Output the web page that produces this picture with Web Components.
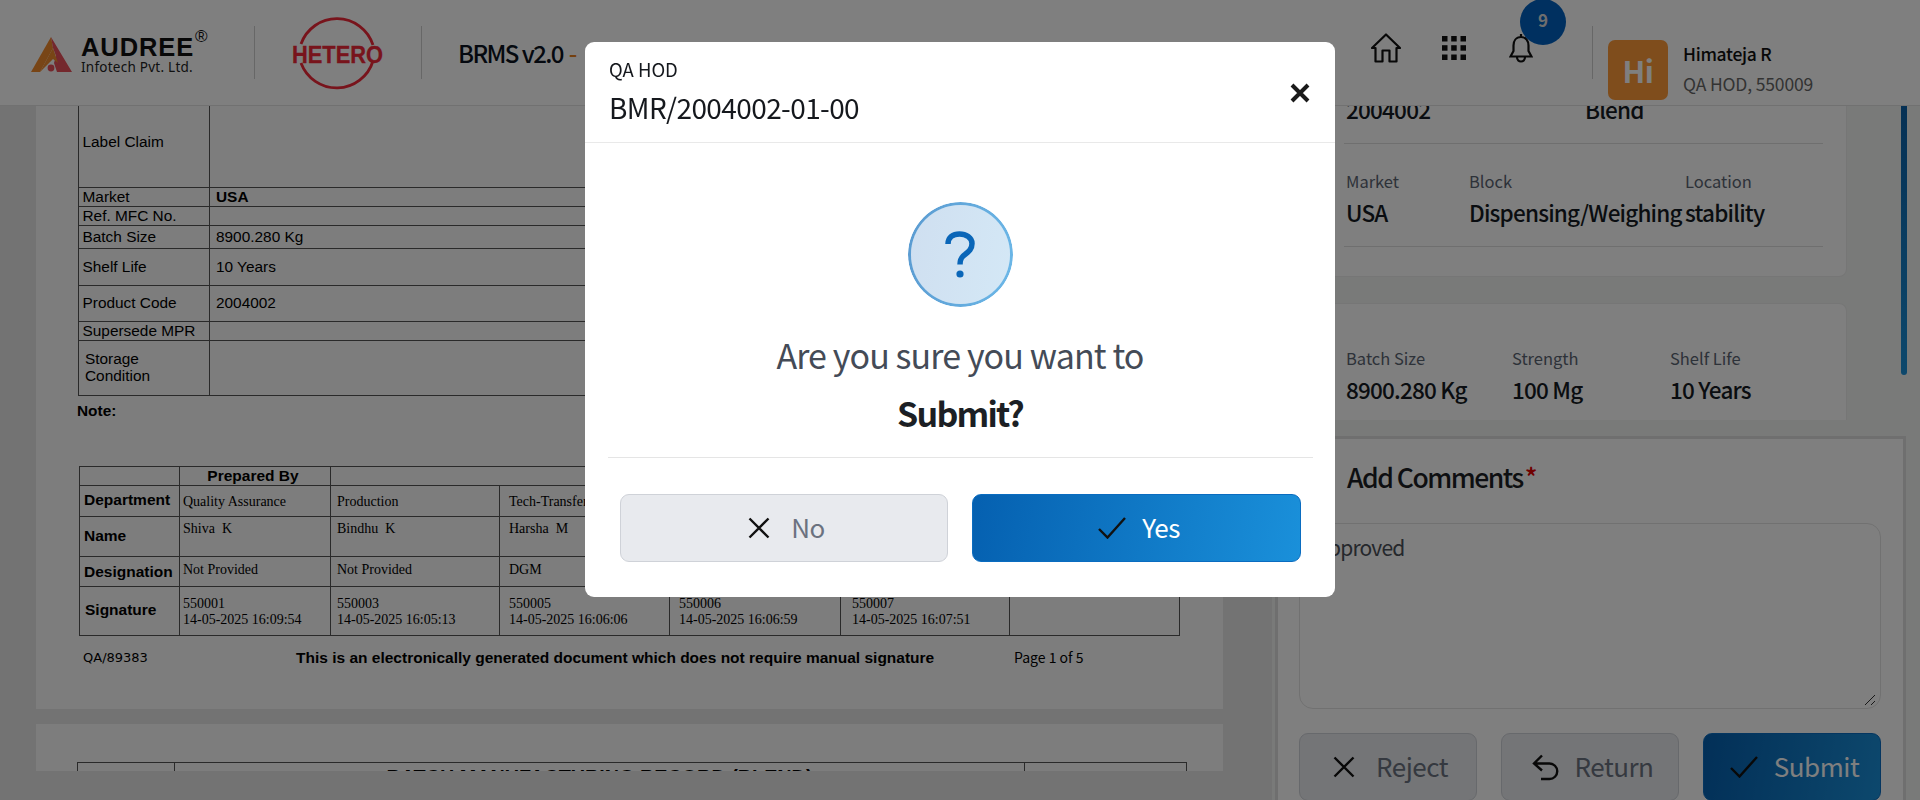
<!DOCTYPE html>
<html lang="en"><head><meta charset="utf-8"><title>BRMS</title>
<style>
html,body{margin:0;padding:0;height:800px;overflow:hidden;background:#e6e6e6;font-family:"Noto Sans CJK SC","Noto Sans",sans-serif}
app-shell{display:block}
</style></head><body>
<app-shell>
  <app-header></app-header>
  <doc-viewer></doc-viewer>
  <side-panel></side-panel>
</app-shell>
<confirm-modal role="QA HOD" doc="BMR/2004002-01-00" action="Submit?"></confirm-modal>
<script>
const SANS='"Noto Sans CJK SC","Noto Sans",sans-serif';
const ICONS={
 x:'<svg width="22" height="22" viewBox="0 0 22 22" fill="none" stroke="#111" stroke-width="2.4"><path d="M1.5 1.5 20.5 20.5M20.5 1.5 1.5 20.5"/></svg>',
 check:'<svg width="28" height="22" viewBox="0 0 28 22" fill="none" stroke="#111" stroke-width="2.4"><path d="M1 12 9.5 20.5 27 1"/></svg>',
 back:'<svg width="27" height="27" viewBox="0 0 27 27" fill="none" stroke="#111" stroke-width="2.4"><path d="M10 1.5 2 9.5 10 16.5M2 9.5H17.5a7.5 7.5 0 0 1 0 15.5H9"/></svg>'
};
function def(name,html,init){
  customElements.define(name,class extends HTMLElement{
    constructor(){super();const s=this.attachShadow({mode:'open'});s.innerHTML=typeof html==='function'?html(this):html;}
    connectedCallback(){ if(typeof html==='function'&&!this._d){this._d=1;this.shadowRoot.innerHTML=html(this);} if(init)init(this);}
  });
}
def('ui-button',el=>`<style>
:host{display:block;box-sizing:border-box;height:68px;border-radius:9px;font:400 26px/1 ${SANS};letter-spacing:-.5px}
.b{box-sizing:border-box;height:100%;display:flex;align-items:center;justify-content:center;gap:${el.getAttribute('icon')==='x'?21:16}px;padding-left:5px;border-radius:9px;border:1.5px solid #cfd2d8;background:#e8eaee;color:#6b7280}
:host([primary]) .b{border-color:#0a6cc0;background:linear-gradient(100deg,#0560b0,#1a90da);color:#fff}
svg{display:block;flex:none}span{position:relative;top:-1px}
</style><div class="b">${ICONS[el.getAttribute('icon')]||''}<span><slot></slot></span></div>`);

def('app-header',`<style>
:host{display:flex;align-items:center;box-sizing:border-box;height:106px;background:#fff;border-bottom:1px solid #e2e2e2;position:relative;font-family:${SANS}}
.audree{width:254px;box-sizing:border-box;padding-left:31px;display:flex;gap:9px;align-items:flex-end;height:53px}
.audree svg{display:block;margin-bottom:7px}
.at{position:relative;width:135px;height:53px}
.at b{position:absolute;left:0;top:9px;font:700 25.500px/24px "Liberation Sans",sans-serif;letter-spacing:.9px;color:#111}
.at i{position:absolute;left:0;top:33px;font:normal 400 13.500px/16px "Noto Sans",sans-serif;letter-spacing:.25px;color:#222;white-space:nowrap}
.at u{position:absolute;left:114px;top:3px;text-decoration:none;font:400 17px/16px "Liberation Sans",sans-serif;color:#111}
.sep{width:1px;height:53px;background:#cfcfcf;flex:none}
.het{width:166px;display:flex;justify-content:center}
.het svg{display:block}
.title{margin-left:36px;font:500 24px/30px ${SANS};letter-spacing:-1.6px;color:#0b1220;white-space:nowrap}
.title em{font-style:normal;color:#e8801e;margin-left:6px}
.right{margin-left:auto;display:flex;align-items:center;height:100%}
.ic{display:flex;align-items:center;gap:41px;margin-right:59px;position:relative;top:-5px}
.ic svg{display:block}
.ic .g{margin-right:2px}
.bell{position:relative}
.badge{position:absolute;left:11px;top:-34px;width:46px;height:46px;border-radius:50%;background:#0060c0;color:#ddd;font:700 17px/42px ${SANS};text-align:center}
.who{display:flex;gap:15px;box-sizing:border-box;width:327px;padding-left:15px;align-items:center;position:relative;top:17px}
.av{width:60px;height:60px;border-radius:7px;background:#ff9a38;color:#fff;font:600 30px/60px ${SANS};letter-spacing:-.5px;text-align:center}
.nm{font:500 17.500px/24px ${SANS};letter-spacing:-.3px;color:#111;white-space:nowrap;margin-top:-1px}
.rl{font:400 17.500px/24px ${SANS};letter-spacing:-.15px;color:#666;white-space:nowrap;margin-top:6px}
</style>
<div class="audree">
 <svg width="41" height="35" viewBox="0 0 41 35"><path d="M20 0 0 35H9L22 11Z" fill="#f08a2c"/><path d="M20 0 41 35H26L23 26 25 19 22 11Z" fill="#e8505a"/><path d="M9 35 22 11l5 15-5-4Z" fill="#f08a2c"/><circle cx="20" cy="31" r="3.400" fill="#e8505a"/></svg>
 <div class="at"><b>AUDREE</b><i>Infotech Pvt. Ltd.</i><u>®</u></div>
</div>
<div class="sep"></div>
<div class="het"><svg width="92" height="80" viewBox="292 12 92 80" fill="none"><path d="M301 43A38 38 0 0 1 373 44M301 62A38 38 0 0 0 373 60" stroke="#f02838" stroke-width="2.800"/><text x="292" y="62" font-family="Liberation Sans" font-weight="700" font-size="24" textLength="91" lengthAdjust="spacingAndGlyphs" fill="#f02838" stroke="#f02838" stroke-width=".3">HETERO</text></svg></div>
<div class="sep"></div>
<div class="title">BRMS v2.0<em>-</em></div>
<div class="right">
 <div class="ic">
  <svg width="30" height="30" viewBox="0 0 30 30" fill="none" stroke="#111" stroke-width="2.200" stroke-linejoin="round"><path d="M1 15 15 1.500 29 15H25.500V28.500H18.500V17.500H11.500V28.500H4.500V15Z"/></svg>
  <svg class="g" width="24" height="24" viewBox="0 0 24 24" fill="#111"><rect width="5.500" height="5.500" x="0" y="0"/><rect width="5.500" height="5.500" x="9.200" y="0"/><rect width="5.500" height="5.500" x="18.500" y="0"/><rect width="5.500" height="5.500" x="0" y="9.200"/><rect width="5.500" height="5.500" x="9.200" y="9.200"/><rect width="5.500" height="5.500" x="18.500" y="9.200"/><rect width="5.500" height="5.500" x="0" y="18.500"/><rect width="5.500" height="5.500" x="9.200" y="18.500"/><rect width="5.500" height="5.500" x="18.500" y="18.500"/></svg>
  <div class="bell"><svg width="24" height="30" viewBox="0 0 24 30" fill="none" stroke="#111" stroke-width="2.200"><path d="M12 1v3M12 4C7 4 4.500 8 4.500 12.500V18L1.500 23.500H22.500L19.500 18V12.500C19.500 8 17 4 12 4ZM8 24c0 6 8 6 8 0"/></svg><div class="badge">9</div></div>
 </div>
 <div class="sep"></div>
 <div class="who"><div class="av">Hi</div><div><div class="nm">Himateja R</div><div class="rl">QA HOD, 550009</div></div></div>
</div>`);

def('doc-viewer',`<style>
:host{display:block;position:absolute;left:0;top:106px;width:1272px;height:665px;overflow:hidden;background:#e6e6e6}
.sheet{margin-left:36px;width:1187px;background:#fbfbfb;box-sizing:border-box;color:#000}
.s1{height:604px;padding:0 0 0 42px}
.s2{height:60px;margin-top:15px;padding:38px 0 0 41px}
table{border-collapse:collapse;table-layout:fixed;font:15.400px/17px "Liberation Sans",sans-serif}
td{border:1px solid #555;padding:0 3.500px;vertical-align:middle;overflow:hidden;white-space:nowrap}
.t1{width:1102px;margin-top:-1px;line-height:15px}
.t1 td{padding-bottom:1.500px}
.t1 td:first-child{width:123px}
.t1 td:nth-child(2){padding-left:6px}
.note{font:700 15.400px/17px "Liberation Sans",sans-serif;margin:6px 0 0 -1px}
.t2{width:1100px;margin:47px 0 0 1px}
.t2 td{padding:0 0 0 3px;font:14px/16px "Liberation Serif",serif}
.t2 td:nth-child(3){padding-left:6px}
.t2 td:nth-child(4),.t2 td:nth-child(5){padding-left:9px}
.t2 td:nth-child(6){padding-left:11px}
.t2 td.l{font:700 15.500px/17px "Liberation Sans",sans-serif;padding-left:4px}
.t2 td.h{font:700 15.500px/15px "Liberation Sans",sans-serif;text-align:center;padding:0 4px 1px 0}
.t2 td.u{padding-bottom:3px}
.t2 tr.sg td{padding-top:2px}
.foot{display:grid;grid-template-columns:213px 718px 1fr;margin:13px 0 0 5px;align-items:center;height:17px;white-space:nowrap}
.foot span:first-child{font:400 13px/17px "DejaVu Sans",sans-serif}
.foot b{font:700 15.500px/17px "Liberation Sans",sans-serif}
.foot span:last-child{font:400 14px/17px "Noto Sans CJK SC",sans-serif}
.t3{width:1109px}
.t3 td{height:30px;font:700 19.800px/22px "Liberation Sans",sans-serif;vertical-align:top;padding-top:3px;text-align:center}
</style>
<div class="sheet s1">
<table class="t1">
<tr style="height:82px"><td style="padding-bottom:10px">Label Claim</td><td></td></tr>
<tr style="height:19px"><td>Market</td><td><b>USA</b></td></tr>
<tr style="height:19px"><td>Ref. MFC No.</td><td></td></tr>
<tr style="height:23px"><td>Batch Size</td><td>8900.280 Kg</td></tr>
<tr style="height:37px"><td>Shelf Life</td><td>10 Years</td></tr>
<tr style="height:36px"><td>Product Code</td><td>2004002</td></tr>
<tr style="height:19px"><td>Supersede MPR</td><td></td></tr>
<tr style="height:55px"><td style="padding:0 0 3px 6px;white-space:normal;line-height:17px">Storage<br>Condition</td><td></td></tr>
</table>
<div class="note">Note:</div>
<table class="t2">
<colgroup><col style="width:100px"><col style="width:151px"><col style="width:169px"><col style="width:170px"><col style="width:171px"><col style="width:169px"><col style="width:170px"></colgroup>
<tr style="height:19px"><td></td><td class="h">Prepared By</td><td colspan="5"></td></tr>
<tr style="height:31px"><td class="l u">Department</td><td style="padding-top:2px">Quality Assurance</td><td style="padding-top:2px">Production</td><td style="padding-top:2px">Tech-Transfer</td><td></td><td></td><td></td></tr>
<tr style="height:40px"><td class="l u">Name</td><td style="vertical-align:top;padding-top:4px">Shiva&nbsp; K</td><td style="vertical-align:top;padding-top:4px">Bindhu&nbsp; K</td><td style="vertical-align:top;padding-top:4px">Harsha&nbsp; M</td><td></td><td></td><td></td></tr>
<tr style="height:30px"><td class="l">Designation</td><td class="u">Not Provided</td><td class="u">Not Provided</td><td class="u">DGM</td><td></td><td></td><td></td></tr>
<tr class="sg" style="height:49px"><td class="l" style="padding:0 0 3px 5px">Signature</td><td>550001<br>14-05-2025 16:09:54</td><td>550003<br>14-05-2025 16:05:13</td><td>550005<br>14-05-2025 16:06:06</td><td>550006<br>14-05-2025 16:06:59</td><td>550007<br>14-05-2025 16:07:51</td><td></td></tr>
</table>
<div class="foot"><span>QA/89383</span><b>This is an electronically generated document which does not require manual signature</b><span>Page 1 of 5</span></div>
</div>
<div class="sheet s2">
<table class="t3"><colgroup><col style="width:97px"><col style="width:850px"><col style="width:162px"></colgroup><tr><td></td><td>BATCH MANUFACTURING RECORD (BLEND)</td><td></td></tr></table>
</div>`);

def('info-field',el=>`<style>
:host{display:block;font-family:${SANS}}
.l{font:400 16.500px/24px ${SANS};color:#5b6472;white-space:nowrap}
.v{font:500 22.500px/30px ${SANS};letter-spacing:-.8px;color:#151a22;white-space:nowrap;margin-top:4px}
</style><div class="l">${el.getAttribute('label')||''}</div><div class="v">${el.getAttribute('value')||''}</div>`);

def('side-panel',`<style>
:host{display:block;position:absolute;left:1272px;top:106px;width:648px;height:694px;overflow:hidden;background:#f2f5f2;font-family:${SANS}}
.card{margin:0 73px 26px 0;background:#fefefe;border:1px solid #ececec;border-radius:0 0 8px 8px;box-sizing:border-box;padding-left:73px}
.c1{height:171px;overflow:hidden;border-top:0}
.row0{display:grid;grid-template-columns:239px 1fr;font:500 22.500px/30px ${SANS};letter-spacing:-.8px;color:#151a22;margin:-12px 23px 0 -2px;height:49px;border-bottom:1px solid #dedede;padding-left:2px}
.row1{display:grid;grid-template-columns:123px 216px 1fr;padding:25px 0 0 2px;margin:0 23px 0 -2px;height:103px;box-sizing:border-box;border-bottom:1px solid #dedede}
.c2{height:117px;border-radius:8px 8px 0 0;border-bottom:0;margin-bottom:16px;padding-top:42px}
.row2{display:grid;grid-template-columns:166px 158px 1fr}
.comments{margin:0 14px 0 3px;background:#fff;border:3px solid #dfdfdf;border-bottom:0;box-sizing:border-box;height:400px;padding:20px 0 0 21px;width:631px}
h3{margin:0 0 0 48px;font:500 26.500px/36px ${SANS};letter-spacing:-1.500px;color:#1c1f24}
h3 i{font-style:normal;color:#e00000;margin-left:2px}
.ta{box-sizing:border-box;width:582px;height:186px;border:1px solid #e2e2e2;border-radius:14px;margin-top:28px;padding:7px 16px;font:400 21px/32px ${SANS};letter-spacing:-.8px;color:#4b5058;position:relative}
.ta svg{position:absolute;right:4px;bottom:2px}
.btns{display:grid;grid-template-columns:repeat(3,178px);gap:24px;margin-top:24px}
.thumb{position:absolute;left:629px;top:0;width:6px;height:269px;background:linear-gradient(#0a60a8,#1a90d8);border-radius:0 0 4px 4px}
</style>
<div class="card c1"><div class="row0"><span>2004002</span><span>Blend</span></div>
<div class="row1"><info-field label="Market" value="USA"></info-field><info-field label="Block" value="Dispensing/Weighing"></info-field><info-field label="Location" value="stability"></info-field></div></div>
<div class="card c2"><div class="row2"><info-field label="Batch Size" value="8900.280 Kg"></info-field><info-field label="Strength" value="100 Mg"></info-field><info-field label="Shelf Life" value="10 Years"></info-field></div></div>
<div class="comments"><h3>Add Comments<i>*</i></h3>
<div class="ta">Approved<svg width="12" height="12" viewBox="0 0 12 12" stroke="#333" fill="none"><path d="M1 11 11 1M7 11 11 7"/></svg></div>
<div class="btns"><ui-button icon="x">Reject</ui-button><ui-button icon="back">Return</ui-button><ui-button icon="check" primary>Submit</ui-button></div></div>
<div class="thumb"></div>`);

def('confirm-modal',el=>`<style>
:host{display:block;position:fixed;inset:0;background:rgba(0,0,0,.5);z-index:10;font-family:${SANS}}
.m{position:absolute;left:585px;top:42px;width:750px;height:555px;background:#fff;border-radius:9px;display:flex;flex-direction:column;color:#111}
.hd{height:101px;box-sizing:border-box;border-bottom:1.500px solid #e9e9e9;padding:12px 24px 0;position:relative}
.r{font:400 18.500px/30px ${SANS};color:#15181d}
.d{font:400 28px/38px ${SANS};letter-spacing:-.6px;color:#15181d;margin-top:4px}
.x{position:absolute;right:25px;top:41px;display:block}
.q{width:105px;height:105px;box-sizing:border-box;border-radius:50%;margin:59px auto 0;background:linear-gradient(100deg,#cfdff0,#d4e8f6);border:3px solid transparent;background-clip:padding-box;position:relative;display:flex;align-items:center;justify-content:center}
.q::before{content:"";position:absolute;inset:-3px;border-radius:50%;padding:3px;background:linear-gradient(100deg,#5a9ad0,#6cb8e8);-webkit-mask:linear-gradient(#000 0 0) content-box,linear-gradient(#000 0 0);-webkit-mask-composite:xor;mask-composite:exclude}
.a{font:400 34px/44px ${SANS};letter-spacing:-.9px;color:#444b57;text-align:center;margin-top:26px}
.s{font:600 34px/44px ${SANS};letter-spacing:-1.800px;color:#1c1f24;text-align:center;margin-top:14px}
hr{border:0;border-top:1.500px solid #e5e5e5;margin:22px 22px 0 23px;width:705px}
.f{display:grid;grid-template-columns:328px 329px;gap:24px;padding:36px 34px 0 35px}
</style>
<div class="m">
 <div class="hd"><div class="r">${el.getAttribute('role')}</div><div class="d">${el.getAttribute('doc')}</div>
  <svg class="x" width="20" height="20" viewBox="0 0 20 20" fill="none" stroke="#1a1a1a" stroke-width="4"><path d="M2 2 18 18M18 2 2 18"/></svg></div>
 <div class="q"><svg width="30" height="48" viewBox="0 0 30 48" fill="none"><path d="M3 13C3 6 8 3 14.500 3S27 6.500 27 12.500C27 18 24 20.500 20 23.500 16.500 26 15 28 15 33.500" stroke="#0a66b8" stroke-width="5.500"/><circle cx="15" cy="43" r="3.600" fill="#0a66b8"/></svg></div>
 <div class="a">Are you sure you want to</div>
 <div class="s">${el.getAttribute('action')}</div>
 <hr>
 <div class="f"><ui-button icon="x">No</ui-button><ui-button icon="check" primary>Yes</ui-button></div>
</div>`);
customElements.define('app-shell',class extends HTMLElement{constructor(){super();this.attachShadow({mode:'open'}).innerHTML='<style>:host{display:block;height:800px}</style><slot></slot>';}});
</script>
</body></html>
